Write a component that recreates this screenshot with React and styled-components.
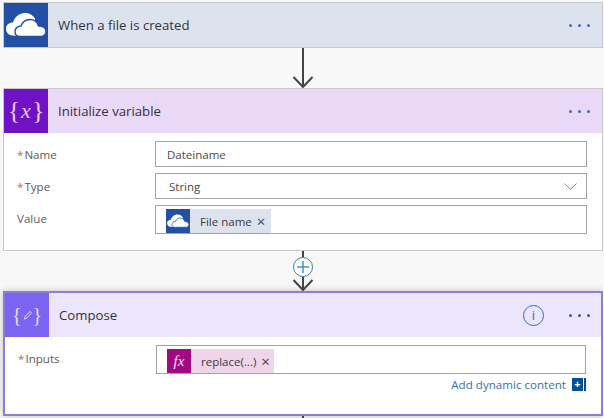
import React from "react";
import styled, { createGlobalStyle } from "styled-components";

const Global = createGlobalStyle`
  html, body { margin: 0; padding: 0; background: #f8f8f8; overflow: hidden; }
  body { width: 604px; height: 418px; font-family: "Open Sans", "Liberation Sans", sans-serif; }
`;

const Page = styled.div`
  width: 600px;
  height: 418px;
  padding: 2px 0 0 3px;
  overflow: hidden;
  display: flex;
  flex-direction: column;
`;

const Card = styled.section`
  box-sizing: border-box;
  flex: none;
  background: #fff;
  border: ${(p) => (p.$selected ? "2px solid #8f7cd6" : "1px solid #c8c8c8")};
  height: ${(p) => p.$height}px;
  box-shadow: ${(p) => (p.$selected ? "0 0 7px rgba(0,0,0,0.22)" : "none")};
`;

const Header = styled.header`
  display: flex;
  align-items: center;
  height: 44px;
  background: ${(p) => p.$bg};
`;

const IconBox = styled.div`
  flex: none;
  width: 44px;
  height: 44px;
  background: ${(p) => p.$bg};
  display: flex;
  align-items: center;
  justify-content: center;
  color: ${(p) => p.$fg};
`;

const Title = styled.h2`
  flex: 1;
  margin: 0 0 0 10px;
  font-weight: 400;
  font-size: 13.2px;
  color: #33333a;
`;

const Dots = styled.div`
  flex: none;
  display: flex;
  gap: 6px;
  margin-right: ${(p) => p.$right}px;
`;

const Dot = styled.i`
  width: 3px;
  height: 3px;
  border-radius: 50%;
  background: ${(p) => p.$color};
`;

const InfoButton = styled.div`
  flex: none;
  box-sizing: border-box;
  width: 21px;
  height: 21px;
  margin-right: 25px;
  border: 1.5px solid #2f72b8;
  border-radius: 50%;
  color: #2f72b8;
  font-size: 13px;
  line-height: 18px;
  text-align: center;
`;

const Connector = styled.div`
  position: relative;
  flex: none;
  height: ${(p) => p.$height}px;
`;

const ArrowArt = styled.svg`
  display: block;
  width: 600px;
  height: 100%;
`;

const AddStep = styled.div`
  position: absolute;
  box-sizing: border-box;
  left: 290px;
  top: 6px;
  width: 20px;
  height: 20px;
  border: 1px solid #3a7fa8;
  border-radius: 50%;
  background: #fff;
  display: flex;
  align-items: center;
  justify-content: center;
`;

const Body = styled.div`
  display: grid;
  grid-template-columns: ${(p) => p.$label}px 1fr;
  row-gap: 6px;
  padding: 8px ${(p) => p.$right}px 0 13px;
`;

const Label = styled.label`
  font-size: 11.6px;
  color: #5c5c5c;
  line-height: 16px;
  padding-top: 6px;
`;

const Star = styled.span`
  color: #c8605b;
  margin-right: 1px;
`;

const Input = styled.div`
  box-sizing: border-box;
  height: ${(p) => p.$height}px;
  border: 1px solid #a2a2a2;
  background: #fff;
  display: flex;
  align-items: ${(p) => (p.$tokens ? "flex-end" : "center")};
  justify-content: space-between;
  padding: ${(p) => p.$pad};
  font-size: 11.5px;
  color: #4a4a4a;
`;

const Token = styled.div`
  display: flex;
  align-items: center;
  height: 24px;
  background: ${(p) => p.$bg};
  color: #3a3a3a;
  font-size: 11.5px;
`;

const TokenIcon = styled.div`
  width: 24px;
  height: 24px;
  background: ${(p) => p.$bg};
  display: flex;
  align-items: center;
  justify-content: center;
  color: #f5e4f0;
  font-family: "Liberation Serif", serif;
  font-style: italic;
  font-size: 15px;
  margin-right: ${(p) => p.$gap}px;
`;

const Remove = styled.span`
  font-size: 15px;
  line-height: 1;
  margin: 0 ${(p) => p.$right}px 0 ${(p) => p.$left}px;
  color: #444;
`;

const BraceIcon = styled.span`
  font-family: "Liberation Serif", serif;
  font-size: ${(p) => p.$size}px;
  line-height: 1;
  display: flex;
  align-items: center;
  gap: ${(p) => p.$gap}px;
`;

const Mark = styled.span`
  font-style: italic;
  font-size: 22px;
`;

const LinkRow = styled.div`
  grid-column: 1 / 3;
  display: flex;
  justify-content: flex-end;
  align-items: center;
  gap: 6px;
  margin-top: -3px;
  padding-right: 3px;
`;

const DynamicLink = styled.a`
  font-size: 11.6px;
  color: #3a6fa5;
`;

const PlusBox = styled.span`
  width: 11px;
  height: 13px;
  background: #004f9f;
  color: #fff;
  font-size: 11px;
  line-height: 12px;
  text-align: center;
  font-weight: 700;
  box-shadow: 1px 0 0 #fff, 3px 0 0 #004f9f;
`;

const Tail = styled.div`
  width: 2px;
  height: 3px;
  background: #444;
  margin-left: 299px;
  flex: none;
`;

const OneDrive = ({ size }) => (
  <svg width={size} height={size} viewBox="0 0 44 44" fill="none">
    <path
      d="M8 32.500C3.500 31.500 2 28.500 2 25.500 2 22 5 19.500 9 19.500 10.500 14 15.500 10 21 10 25.500 10 29 12 31 15.500V21L14 33z"
      fill="#fff"
    />
    <path
      d="M16 33.500C12.500 33.500 11 31 11 28.500 11 25.500 13.500 23 17 23 18.500 19 22 16.500 26 16.500 30.500 16.500 33.500 19.500 34.500 23 38.500 23 42 25 42 28.500 42 31.500 39.500 33.500 37 33.500z"
      fill="#fff"
      stroke="#2350a5"
      strokeWidth="1.4"
    />
  </svg>
);

const Arrow = ({ h }) => (
  <ArrowArt viewBox={`0 0 600 ${h}`} preserveAspectRatio="none">
    <path
      d={`M300 0V${h - 1}M290.500 ${h - 11}L300 ${h - 1}L309.500 ${h - 11}`}
      fill="none"
      stroke="#444"
      strokeWidth="2"
    />
  </ArrowArt>
);

const Pencil = () => (
  <svg width="11" height="11" viewBox="0 0 14 14" fill="none" stroke="#e6e0ff" strokeWidth="1.2">
    <path d="M3 11.500l.8-3L9.500 2.500c.7-.6 1.600-.5 2 0 .5.500.5 1.300 0 1.900L5.800 10.500z" />
  </svg>
);

const DotRow = ({ color, right }) => (
  <Dots $right={right}>
    <Dot $color={color} />
    <Dot $color={color} />
    <Dot $color={color} />
  </Dots>
);

export default function App() {
  return (
    <>
      <Global />
      <Page>
        <Card $height={46}>
          <Header $bg="#dde3ee">
            <IconBox $bg="#2350a5">
              <OneDrive size={44} />
            </IconBox>
            <Title>When a file is created</Title>
            <DotRow color="#3f6fb5" right={12} />
          </Header>
        </Card>

        <Connector $height={40}>
          <Arrow h={40} />
        </Connector>

        <Card $height={163}>
          <Header $bg="#ead8f7">
            <IconBox $bg="#6f12c5" $fg="#e6c8f5">
              <BraceIcon $size={26} $gap={1}>
                {"{"}
                <Mark>x</Mark>
                {"}"}
              </BraceIcon>
            </IconBox>
            <Title>Initialize variable</Title>
            <DotRow color="#3f6fb5" right={12} />
          </Header>
          <Body $label={138} $right={15}>
            <Label>
              <Star>*</Star>Name
            </Label>
            <Input $height={26} $pad="0 11px">Dateiname</Input>
            <Label>
              <Star>*</Star>Type
            </Label>
            <Input $height={26} $pad="0 9px 0 13px">
              String
              <svg width="13" height="7" viewBox="0 0 13 7" fill="none" stroke="#888" strokeWidth="1">
                <path d="M.5.500L6.500 6.500L12.500.500" />
              </svg>
            </Input>
            <Label>Value</Label>
            <Input $height={29} $pad="0 0 0 10px" $tokens>
              <Token $bg="#dde3ee">
                <TokenIcon $bg="#2350a5" $gap={10}>
                  <OneDrive size={24} />
                </TokenIcon>
                File name
                <Remove $left={5} $right={6}>×</Remove>
              </Token>
            </Input>
          </Body>
        </Card>

        <Connector $height={40}>
          <Arrow h={40} />
          <AddStep>
            <svg width="12" height="12" viewBox="0 0 12 12" stroke="#3f97d0" strokeWidth="1.500">
              <path d="M6 0V12M0 6H12" />
            </svg>
          </AddStep>
        </Connector>

        <Card $height={125} $selected>
          <Header $bg="#ebe5fd">
            <IconBox $bg="#7b64f2" $fg="#e6e0ff">
              <BraceIcon $size={20} $gap={0}>
                {"{"}
                <Pencil />
                {"}"}
              </BraceIcon>
            </IconBox>
            <Title>Compose</Title>
            <InfoButton>i</InfoButton>
            <DotRow color="#4a5a80" right={11} />
          </Header>
          <Body $label={138} $right={15}>
            <Label>
              <Star>*</Star>Inputs
            </Label>
            <Input $height={29} $pad="0 0 0 10px" $tokens>
              <Token $bg="#efd5ea">
                <TokenIcon $bg="#a20a82" $gap={10}>fx</TokenIcon>
                replace(...)
                <Remove $left={5} $right={4}>×</Remove>
              </Token>
            </Input>
            <LinkRow>
              <DynamicLink>Add dynamic content</DynamicLink>
              <PlusBox>+</PlusBox>
            </LinkRow>
          </Body>
        </Card>

        <Tail />
      </Page>
    </>
  );
}
